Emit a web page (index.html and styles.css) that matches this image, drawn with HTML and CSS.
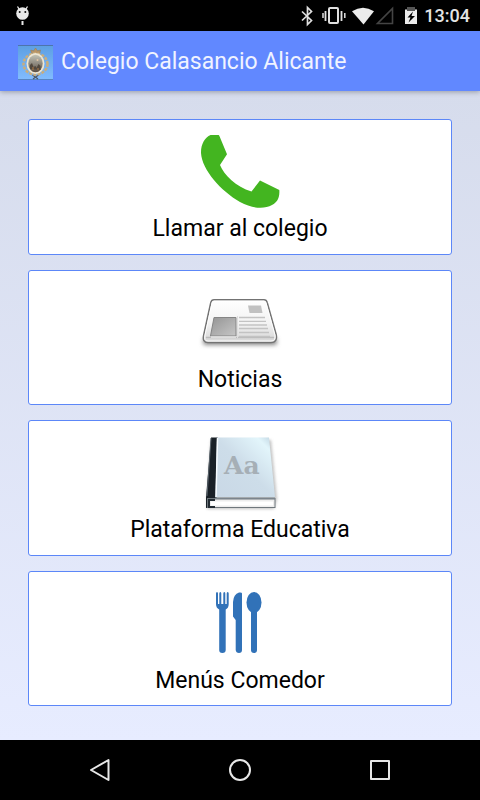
FILE: index.html
```html
<!DOCTYPE html>
<html lang="es">
<head>
<meta charset="utf-8">
<meta name="viewport" content="width=device-width, initial-scale=1">
<title>Colegio Calasancio Alicante</title>
<link rel="stylesheet" href="styles.css">
</head>
<body>
<div class="status">
  <svg class="status-droid" viewBox="0 0 16 22" width="16" height="22" aria-hidden="true">
    <path d="M2.500 1.500 4 4M12.500 1.500 11 4" stroke="#e8e8e8" stroke-width="1.300"/>
    <circle cx="7.500" cy="8.500" r="6.300" fill="#e8e8e8"/>
    <circle cx="4.700" cy="7" r="1" fill="#111"/><circle cx="10.300" cy="7" r="1" fill="#111"/>
    <path d="M7.500 16v4" stroke="#e8e8e8" stroke-width="2"/>
  </svg>
  <svg class="status-icons" viewBox="0 0 118 24" width="118" height="24" aria-hidden="true">
    <path d="M2 7.500 11.500 16.500 7.500 20.500V3.500l4 4-9.500 9" fill="none" stroke="#e0e0e0" stroke-width="1.700"/>
    <g fill="none" stroke="#e0e0e0">
      <rect x="29" y="4" width="9" height="15" rx="1" stroke-width="2"/>
      <path d="M25.500 7v10M41.500 7v10" stroke-width="1.800"/>
      <path d="M23 9v5M44.800 9v5" stroke-width="1.500"/>
    </g>
    <path d="M52 7.300Q63 0 74 7.300L63.500 20.500Z" fill="#ececec"/>
    <path d="M77.500 19.500H92.500V4.500Z" fill="none" stroke="#444" stroke-width="1.600"/>
    <path d="M107 3h8v3h-8z" fill="#555"/>
    <path d="M105 5.500h12V20h-12z" fill="#ececec"/>
    <path d="M107 5h8v2h-8z" fill="#555"/>
    <path d="M113 7.500 107.500 13.500h3L108.500 18.500 115 12h-3.500Z" fill="#000"/>
  </svg>
  <time class="clock">13:04</time>
</div>

<header class="appbar">
  <svg class="crest" viewBox="0 0 35 35" width="35" height="35" aria-hidden="true">
    <defs>
      <linearGradient id="sky" x1="0" y1="0" x2="0" y2="1"><stop offset="0" stop-color="#5c9fe2"/><stop offset="1" stop-color="#82bcff"/></linearGradient>
      <linearGradient id="scene" x1="0" y1="0" x2="0" y2="1"><stop offset="0" stop-color="#c3c4b6"/><stop offset=".5" stop-color="#8f8a80"/><stop offset="1" stop-color="#5b4f42"/></linearGradient>
    </defs>
    <rect width="35" height="35" rx="1" fill="url(#sky)"/>
    <path d="M0 .5h35" stroke="#4d74ad"/><path d="M0 34.500h35" stroke="#5785c4"/>
    <path d="M13.500 8.500 12.800 5l3 .8L17.500 3l2 2.800 3-.8-.8 3.500Z" fill="#b89566" stroke="#94805d" stroke-width=".6"/>
    <path d="M14.500 30 20 34M20.500 30 15 34" stroke="#4c5865" stroke-width="1.200"/>
    <ellipse cx="17.500" cy="19" rx="12" ry="10.500" fill="none" stroke="#c9ad7c" stroke-width="2.500" stroke-dasharray="3 1.200"/>
    <ellipse cx="17.500" cy="18.500" rx="9" ry="10.500" fill="#eee6d2"/>
    <ellipse cx="17.500" cy="18.500" rx="7.200" ry="8.800" fill="url(#scene)"/>
    <path d="M12 24V20l2-2 1.500 4 2-1 1 2 2-4 2 2v4Z" fill="#51483e"/>
    <circle cx="19.500" cy="15" r="1" fill="#e2c4a2"/><path d="M15 22v3M19 24h2" stroke="#b27b45"/>
  </svg>
  <h1 class="title">Colegio Calasancio Alicante</h1>
</header>

<main class="menu">
  <button class="card" type="button">
    <svg class="icon" viewBox="0 0 100 90" width="100" height="90" aria-hidden="true">
      <path d="M20.500 10H28.500Q29 10 29.300 10.800L37 29.300 30 40C34 50 46 62 61.500 66.500L70 55.500 89.300 65C90 74 86 78 82 80C74 84.500 62 83.500 50 77C31 66 12 45 11 28C10.800 19 15 12.500 20.500 10Z" fill="#43b520"/>
    </svg>
    <span class="label">Llamar al colegio</span>
  </button>

  <button class="card" type="button">
    <svg class="icon" viewBox="0 0 100 90" width="100" height="90" aria-hidden="true">
      <defs>
        <linearGradient id="paper" x1="0" y1="0" x2="0" y2="1"><stop offset="0" stop-color="#fff"/><stop offset=".55" stop-color="#f3f3f3"/><stop offset="1" stop-color="#d5d5d5"/></linearGradient>
        <linearGradient id="photo" x1="0" y1="0" x2="1" y2="1"><stop offset="0" stop-color="#949494"/><stop offset="1" stop-color="#c6c6c6"/></linearGradient>
        <filter id="soft" x="-20%" y="-100%" width="140%" height="300%"><feGaussianBlur stdDeviation="2"/></filter>
      </defs>
      <rect x="13" y="62" width="74" height="7" rx="3" fill="#888" filter="url(#soft)"/>
      <path d="M24 23.700H74Q76.500 23.700 77.200 26.500L86.300 59Q87.500 66.500 81 66.500H18Q12 66.500 13.700 59L20.800 26.500Q21.500 23.700 24 23.700Z" fill="url(#paper)" stroke="#737373" stroke-width="1.500"/>
      <path d="M24 25.200H74Q75.500 25.200 76 27L85 59Q86 65 81 65H18Q13.500 65 15 59L22 27Q22.300 25.200 24 25.200Z" fill="none" stroke="#fff"/>
      <path d="M16 61.500H84" stroke="#bbb" stroke-width="1.500"/>
      <path d="M24 41.500H46V60H20.500Z" fill="url(#photo)" stroke="#858585"/>
      <path d="M21 61h25" stroke="#fff"/>
      <path d="M58 29.500H71L72.500 37H59.500Z" fill="#c1c1c1"/>
      <path d="M49 41.500H75M49 45.300H76M49 49H77M49 52.500H78M49 56.500H79M49 60.500H80" stroke="#c3c3c3" stroke-width="1.300"/>
      <path d="M47.500 40v22" stroke="#dedede"/>
    </svg>
    <span class="label">Noticias</span>
  </button>

  <button class="card" type="button">
    <svg class="icon" viewBox="0 0 100 90" width="100" height="90" aria-hidden="true">
      <defs>
        <linearGradient id="cover" x1="0" y1="1" x2="1" y2="0"><stop offset="0" stop-color="#c9d8e6"/><stop offset=".5" stop-color="#cddde9"/><stop offset=".85" stop-color="#e2f5fb"/><stop offset="1" stop-color="#b9cfdd"/></linearGradient>
        <filter id="bookshade" x="-20%" y="-20%" width="140%" height="140%"><feGaussianBlur stdDeviation="1.500"/></filter>
      </defs>
      <path d="M21 14H81L87 73 84 83H17V72Z" fill="#999" filter="url(#bookshade)" opacity=".6"/>
      <path d="M21 11.500H28L26.500 72 28 80.500 16 82 16 71.500Z" fill="#192027"/>
      <path d="M21 12 17 70" stroke="#59636b"/>
      <path d="M27 11.500H79L85 71H25.500Z" fill="url(#cover)"/>
      <path d="M27.500 12 26 71" stroke="#f6fbff" stroke-width="1.500"/>
      <path d="M17 72H85.500V82H17Z" fill="#6f777c"/>
      <path d="M18 73.500H84.500V81H18Z" fill="#ededed"/>
      <path d="M25 72H85" stroke="#87929b"/><path d="M25 74h-6v7h6" fill="none" stroke="#222b32" stroke-width="2"/>
      <path d="M21 77.500H83" stroke="#fff" stroke-width="4"/>
      <text class="book-letters" x="34" y="48">Aa</text>
    </svg>
    <span class="label">Plataforma Educativa</span>
  </button>

  <button class="card" type="button">
    <svg class="icon" viewBox="0 0 100 90" width="100" height="90" aria-hidden="true">
      <g fill="#3172b8">
        <path d="M26 16.500Q26 15 27 15T28 16.500V27H29.300V16.500Q29.300 15 30.300 15T31.300 16.500V27H33.300V16.500Q33.300 15 34.300 15T35.300 16.500V27H36.700V16.500Q36.700 15 37.700 15T38.700 16.500V27Q38.700 31 35.700 32.500V73Q35.700 76 32.400 76T29.200 73V32.500Q26 31 26 27Z"/>
        <path d="M52 16.500V73Q52 76 49 76T45.700 73V43L43 39.500V25Q43.500 17 49 15.500Q52 15 52 16.500Z"/>
        <ellipse cx="64" cy="25.500" rx="7.500" ry="10.500"/><path d="M61 34H67V73Q67 76 64 76T61 73Z"/>
      </g>
    </svg>
    <span class="label">Menús Comedor</span>
  </button>
</main>

<nav class="navbar" aria-label="Sistema">
  <button class="nav-btn" type="button" aria-label="Atrás"><svg viewBox="0 0 24 24" width="24" height="24"><path d="M3 12 20.500 2V22Z"/></svg></button>
  <button class="nav-btn" type="button" aria-label="Inicio"><svg viewBox="0 0 24 24" width="24" height="24"><circle cx="12" cy="12" r="10"/></svg></button>
  <button class="nav-btn" type="button" aria-label="Recientes"><svg viewBox="0 0 24 24" width="24" height="24"><rect x="3" y="3" width="18" height="18"/></svg></button>
</nav>
</body>
</html>
```
FILE: styles.css
```css
* {
  box-sizing: border-box;
}

body {
  margin: 0;
  min-height: 100vh;
  display: flex;
  flex-direction: column;
  font-family: Roboto, "Liberation Sans", sans-serif;
  background: #000;
}

.status {
  display: flex;
  align-items: center;
  height: 31px;
  padding: 0 10px 0 15px;
}

.status-icons {
  margin-left: auto;
}

.clock {
  margin-left: 6px;
  color: #e4e4e4;
  font-size: 18px;
  font-weight: 500;
  line-height: 32px;
}

.appbar {
  position: relative;
  display: flex;
  align-items: center;
  gap: 8px;
  height: 60px;
  padding: 2px 18px 0;
  background: #6188ff;
  box-shadow: 0 1px 5px rgba(0, 0, 0, 0.3);
}

.title {
  margin: 0;
  color: #f0f3ff;
  font-size: 23px;
  font-weight: 400;
  line-height: 32px;
}

.menu {
  flex: 1;
  display: flex;
  flex-direction: column;
  gap: 15px;
  padding: 28px 28px 34px;
  background: linear-gradient(#d6dcec, #e7ecff);
}

.card {
  flex: 1;
  display: flex;
  flex-direction: column;
  align-items: center;
  justify-content: flex-start;
  padding: 5px 8px 10px;
  border: 1px solid #5c87f8;
  border-radius: 3px;
  background: #fff;
  color: #000;
  font-family: inherit;
}

.icon {
  display: block;
}

.label {
  font-size: 23px;
  line-height: 28px;
}

.book-letters {
  fill: #a6afb6;
  font-family: "DejaVu Serif", serif;
  font-size: 25px;
  font-weight: 700;
}

.navbar {
  display: flex;
  justify-content: center;
  height: 60px;
}

.nav-btn {
  display: flex;
  align-items: center;
  justify-content: center;
  width: 140px;
  padding: 0;
  border: 0;
  background: none;
}

.nav-btn svg {
  fill: none;
  stroke: #e8e8e8;
  stroke-width: 2;
  stroke-linejoin: round;
}
```
